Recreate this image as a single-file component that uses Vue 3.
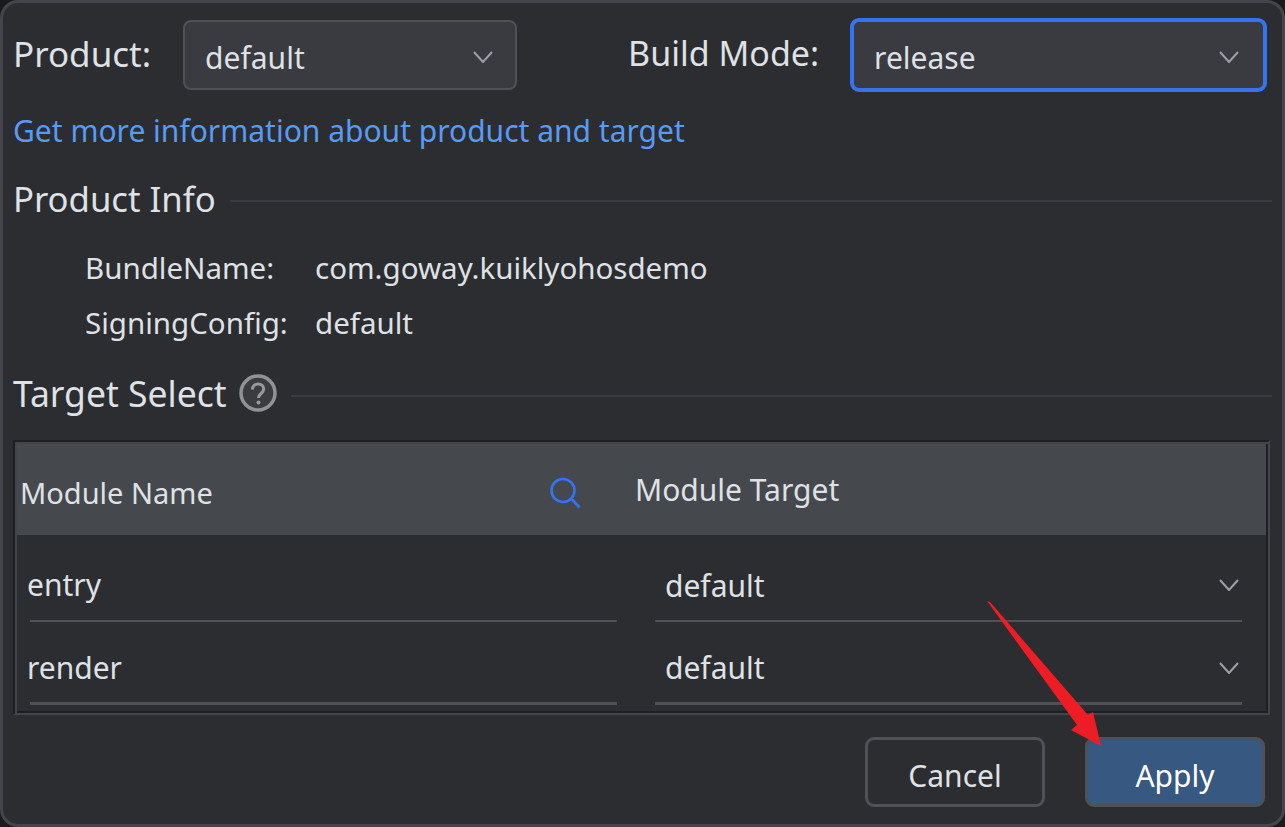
<template>
  <div class="dialog">
    <div class="top-row">
      <span class="top-label product-label">Product:</span>
      <div class="select product">
        <span>default</span>
        <svg class="chev" width="20" height="12" viewBox="0 0 20 12"><path d="M1 1 10 11 19 1" /></svg>
      </div>
      <span class="top-label mode-label">Build Mode:</span>
      <div class="select mode">
        <span>release</span>
        <svg class="chev" width="20" height="12" viewBox="0 0 20 12"><path d="M1 1 10 11 19 1" /></svg>
      </div>
    </div>

    <a class="link">Get more information about product and target</a>

    <div class="section info-head">
      <span>Product Info</span>
      <i class="rule"></i>
    </div>

    <div class="info">
      <div class="info-row" v-for="row in info" :key="row.label">
        <span class="info-label">{{ row.label }}</span>
        <span>{{ row.value }}</span>
      </div>
    </div>

    <div class="section target-head">
      <span>Target Select</span>
      <svg class="help" width="38" height="38" viewBox="0 0 38 38">
        <circle cx="19" cy="19" r="17" fill="#3a3c40" stroke="#909294" stroke-width="3.500" />
        <path d="M13.500 15.500c0-3.500 2.500-5.500 5.700-5.500s5.500 2 5.500 5c0 4.500-5.200 4.500-5.200 9" fill="none" stroke="#97999b" stroke-width="3" />
        <circle cx="19.500" cy="28.500" r="2" fill="#97999b" />
      </svg>
      <i class="rule"></i>
    </div>

    <div class="table">
      <div class="thead">
        <div class="th-name">
          <span>Module Name</span>
          <svg width="32" height="32" viewBox="0 0 32 32" fill="none" stroke="#3574f0" stroke-width="2.600">
            <circle cx="14" cy="13.500" r="11.500" />
            <path d="M22.500 22 30.500 30.500" />
          </svg>
        </div>
        <span class="th-target">Module Target</span>
      </div>
      <div class="tr" v-for="name in modules" :key="name">
        <div class="td-name">{{ name }}</div>
        <div class="td-target">
          <span>default</span>
          <svg class="chev" width="20" height="12" viewBox="0 0 20 12"><path d="M1 1 10 11 19 1" /></svg>
        </div>
      </div>
    </div>

    <div class="footer">
      <button class="btn">Cancel</button>
      <button class="btn primary">Apply</button>
    </div>

    <svg class="arrow" width="1285" height="827" viewBox="0 0 1285 827">
      <polygon points="987,601 990,602 1088,715 1093,712 1101,746 1071,730 1077,725" fill="#ee1c25" />
    </svg>
  </div>
</template>

<script setup>
const info = [
  { label: "BundleName:", value: "com.goway.kuiklyohosdemo" },
  { label: "SigningConfig:", value: "default" },
];
const modules = ["entry", "render"];
</script>

<style>
html, body {
  margin: 0;
  background: #1a1b1d;
}
</style>

<style scoped>
.dialog {
  position: relative;
  box-sizing: border-box;
  width: 1285px;
  height: 827px;
  padding: 15px 10px 0 10px;
  background: #2b2d30;
  border: 3px solid #43454a;
  border-radius: 18px;
  color: #dfe1e5;
  font-family: "Noto Sans", "Open Sans", sans-serif;
  font-size: 30px;
  overflow: hidden;
}

.top-row {
  display: flex;
  align-items: center;
  height: 74px;
}

.top-label {
  margin-top: -4px;
  font-size: 34px;
}

.product-label {
  font-size: 35px;
}

.mode-label {
  margin-left: 111px;
}

.select {
  box-sizing: border-box;
  display: flex;
  align-items: center;
  justify-content: space-between;
  padding-top: 4px;
  background: #393b40;
  border-radius: 8px;
}

.product {
  width: 334px;
  height: 70px;
  margin-left: 32px;
  padding-left: 20px;
  padding-right: 22px;
  border: 2px solid #4e5157;
}

.mode {
  width: 417px;
  height: 74px;
  margin-left: 31px;
  padding-left: 20px;
  padding-right: 24px;
  border: 4px solid #3574f0;
  border-radius: 9px;
}

.chev {
  fill: none;
  stroke: #9da0a8;
  stroke-width: 2;
}

.link {
  display: block;
  margin-top: 19px;
  line-height: 40px;
  color: #589af5;
}

.section {
  display: flex;
  align-items: center;
  height: 40px;
  font-size: 34.700px;
}

.rule {
  flex: 1;
  height: 2px;
  background: #393b40;
  margin-top: 5px;
}

.info-head {
  margin-top: 27px;
  gap: 14px;
}

.info {
  margin-top: 22px;
  padding-left: 72px;
  font-size: 29.500px;
}

.info-row {
  display: flex;
  align-items: center;
  height: 55px;
}

.info-label {
  width: 230px;
}

.target-head {
  margin-top: 23px;
  font-size: 35.500px;
}

.help {
  margin-left: 12px;
  margin-right: 14px;
  filter: blur(0.6px);
}

.table {
  box-sizing: border-box;
  width: 1257px;
  height: 275px;
  margin-top: 27px;
  padding: 2px;
  border: 2px solid;
  border-color: #1e1f22 #43454a #43454a #1e1f22;
  box-shadow: inset 2px 2px #43454a, inset -2px -2px #1e1f22;
  overflow: hidden;
}

.thead {
  display: flex;
  align-items: center;
  height: 91px;
  margin-bottom: 4px;
  background: #45494d;
}

.th-name {
  display: flex;
  align-items: center;
  justify-content: space-between;
  width: 561px;
  padding-left: 3px;
  margin-top: 6px;
  margin-right: 54px;
  font-size: 29px;
}

.th-target {
  margin-top: -1px;
}

.tr {
  display: flex;
  height: 83px;
}

.td-name {
  box-sizing: border-box;
  width: 587px;
  margin-left: 13px;
  line-height: 92px;
  border-bottom: 2px solid #4e5157;
  text-indent: -3px;
}

.td-target {
  box-sizing: border-box;
  display: flex;
  align-items: center;
  justify-content: space-between;
  width: 587px;
  margin-left: 38px;
  padding: 11px 3px 0 10px;
  border-bottom: 2px solid #4e5157;
}

.tr:last-child .td-name,
.tr:last-child .td-target {
  border-bottom-width: 3px;
}

.footer {
  display: flex;
  justify-content: flex-end;
  gap: 40px;
  margin-top: 22px;
  padding-right: 7px;
}

.btn {
  width: 180px;
  height: 70px;
  background: transparent;
  border: 3px solid #4e5157;
  border-radius: 9px;
  color: #dfe1e5;
  font: inherit;
  padding: 6px 0 0;
}

.primary {
  background: #375880;
  color: #fff;
}

.arrow {
  position: absolute;
  left: -3px;
  top: -3px;
  pointer-events: none;
}
</style>
